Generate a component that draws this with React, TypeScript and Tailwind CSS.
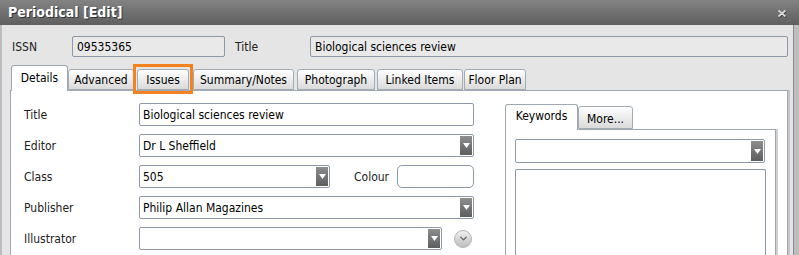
import { ChevronDown } from "lucide-react";

const tabs = [
  { label: "Details", cls: "w-[57px]", active: true },
  { label: "Advanced", cls: "w-[66px]" },
  { label: "Issues", cls: "ml-[3px] w-[52px]", focus: true },
  { label: "Summary/Notes", cls: "ml-[4px] w-[101px]" },
  { label: "Photograph", cls: "ml-[3px] w-[78px]" },
  { label: "Linked Items", cls: "ml-[2px] w-[86px]" },
  { label: "Floor Plan", cls: "ml-[1px] w-[62px]" },
];

function Arrow() {
  return (
    <span className="w-[12px] self-stretch bg-gradient-to-b from-[#8e8e8e] to-[#5e5e5e] flex items-center justify-center">
      <svg width="7" height="5" viewBox="0 0 7 5">
        <path d="M0 0H7L3.5 5Z" fill="#fff" />
      </svg>
    </span>
  );
}

function Field({ value, w, drop }: { value?: string; w: string; drop?: boolean }) {
  return (
    <div className={`${w} h-[23px] border border-[#8d99a6] rounded-[2px] bg-white flex items-center p-[1px]`}>
      <span className="flex-1 pl-[2px] truncate">{value}</span>
      {drop && <Arrow />}
    </div>
  );
}

function Row({ label, children }: { label: string; children: React.ReactNode }) {
  return (
    <div className="flex items-center h-[23px]">
      <span className="w-[115px] text-[#222]">{label}</span>
      {children}
    </div>
  );
}

export default function App() {
  return (
    <div className="w-[799px] h-[255px] overflow-hidden bg-[#bdbdbd] font-['DejaVu_Sans_Condensed','DejaVu_Sans',sans-serif] text-[12px] text-black">
      {/* Title bar */}
      <div className="h-[25px] bg-gradient-to-b from-[#838383] to-[#5f5f5f] flex items-center justify-between pl-[8px] pr-[12px]">
        <span className="text-white font-bold text-[14px] [text-shadow:1px_1px_0_#333]">Periodical [Edit]</span>
        <svg width="10" height="9" viewBox="0 0 10 9" className="mt-[1px]">
          <path d="M1.5 1.5L8.5 7.5M8.5 1.5L1.5 7.5" stroke="#333" strokeWidth="2" transform="translate(0.6 0.8)" />
          <path d="M1.5 1.5L8.5 7.5M8.5 1.5L1.5 7.5" stroke="#d8d8d8" strokeWidth="1.8" />
        </svg>
      </div>

      <div className="h-[230px] ml-[2px] mr-[5px] bg-[#e5e5e5] border-r border-[#8a8a8a] pl-[8px] pr-[5px] pt-[11px]">
        {/* ISSN / Title */}
        <div className="flex items-center h-[21px] ml-[2px]">
          <span className="w-[60px] text-[#222]">ISSN</span>
          <div className="w-[153px] h-[21px] border border-[#8d99a6] rounded-[2px] bg-[#e9e9e9] flex items-center px-[4px]">09535365</div>
          <span className="ml-[10px] w-[75px] text-[#222]">Title</span>
          <div className="w-[478px] h-[21px] border border-[#8d99a6] rounded-[2px] bg-[#e9e9e9] flex items-center px-[4px]">Biological sciences review</div>
        </div>

        {/* Tabs */}
        <div className="flex items-end h-[25px] mt-[8px] ml-[1px] relative z-10">
          {tabs.map((t) =>
            t.active ? (
              <div key={t.label} className={`${t.cls} h-[26px] -mb-[1px] bg-white border border-b-0 border-[#9ea8b2] rounded-t-[3px] flex items-center justify-center pb-[1px]`}>
                {t.label}
              </div>
            ) : (
              <div key={t.label} className={`${t.cls} relative h-[21px] bg-gradient-to-b from-white to-[#dadada] border border-[#a3abb3] rounded-t-[3px] flex items-center justify-center pt-[1px]`}>
                {t.label}
                {t.focus && <div className="absolute -left-[5px] -right-[5px] -top-[6px] -bottom-[5px] border-[3px] border-[#f58220]" />}
              </div>
            )
          )}
        </div>

        {/* Panel */}
        <div className="h-[170px] bg-white border border-[#9ea8b2] border-b-0 shadow-[2px_0_0_#c6c6c6] flex pl-[13px] pt-[12px]">
          <div className="flex flex-col gap-[8px] w-[451px]">
            <Row label="Title">
              <Field value="Biological sciences review" w="w-[335px]" />
            </Row>
            <Row label="Editor">
              <Field value="Dr L Sheffield" w="w-[335px]" drop />
            </Row>
            <Row label="Class">
              <Field value="505" w="w-[191px]" drop />
              <span className="ml-[24px] w-[43px] text-[#222]">Colour</span>
              <div className="w-[77px] h-[23px] border border-[#8d99a6] rounded-[5px] bg-white" />
            </Row>
            <Row label="Publisher">
              <Field value="Philip Allan Magazines" w="w-[335px]" drop />
            </Row>
            <Row label="Illustrator">
              <Field w="w-[303px]" drop />
              <span className="ml-[12px] w-[18px] h-[18px] rounded-full border border-[#b4b4b4] bg-gradient-to-b from-[#f0f0f0] to-[#bdbdbd] flex items-center justify-center">
                <ChevronDown className="w-[11px] h-[11px] text-[#666]" strokeWidth={3} />
              </span>
            </Row>
          </div>

          {/* Keywords */}
          <div className="ml-[30px] mt-[1px] w-[271px] flex flex-col">
            <div className="flex items-end h-[25px] relative z-10">
              <div className="w-[73px] h-[26px] -mb-[1px] bg-white border border-b-0 border-[#9ea8b2] rounded-t-[3px] flex items-center justify-center pb-[3px]">
                Keywords
              </div>
              <div className="w-[55px] h-[23px] bg-gradient-to-b from-white to-[#dadada] border border-[#a3abb3] rounded-t-[3px] flex items-center justify-center pt-[2px]">
                More...
              </div>
            </div>
            <div className="flex-1 bg-white border border-[#9ea8b2] border-b-0 shadow-[2px_0_0_#d0d0d0] pl-[9px] pr-[9px] pt-[9px] flex flex-col gap-[6px]">
              <Field w="w-[250px] h-[24px]" drop />
              <div className="flex-1 w-[251px] border border-[#8d99a6] rounded-[2px] border-b-0" />
            </div>
          </div>
        </div>
      </div>
    </div>
  );
}
